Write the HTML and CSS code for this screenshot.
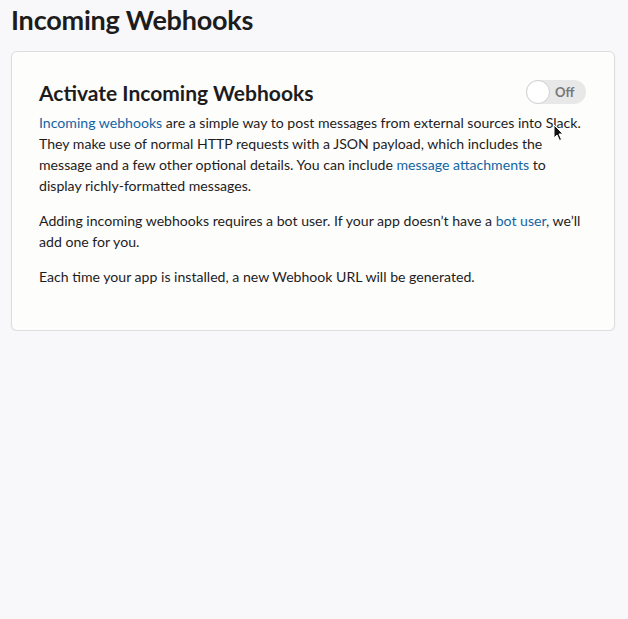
FILE: index.html
```html
<!DOCTYPE html>
<html lang="en">
<head>
    <meta charset="UTF-8">
    <title>Incoming Webhooks</title>
    <link rel="stylesheet" href="styles.css">
</head>
<body>
    <h1>Incoming Webhooks</h1>
    <div class="card">
        <div class="card-head">
            <h2>Activate Incoming Webhooks</h2>
            <div class="toggle">
                <span class="knob"></span>
                <span class="toggle-label">Off</span>
            </div>
        </div>
        <p><a href="#">Incoming webhooks</a> are a simple way to post messages from external sources into Slack. They make use of normal HTTP requests with a JSON payload, which includes the message and a few other optional details. You can include <a href="#">message attachments</a> to display richly-formatted messages.</p>
        <p>Adding incoming webhooks requires a bot user. If your app doesn’t have a <a href="#">bot user</a>, we’ll add one for you.</p>
        <p>Each time your app is installed, a new Webhook URL will be generated.</p>
        <!-- puntero del ratón -->
        <svg class="cursor" width="12" height="18" viewBox="0 0 12 18">
            <path d="M1 1 L1 14 L4 11 L6.5 16.5 L8.5 15.5 L6 10 L10 10 Z" fill="#111" stroke="#fff" stroke-width="1"/>
        </svg>
    </div>
</body>
</html>
```

FILE: styles.css
```css
body {
    font-family: Lato, "Open Sans", sans-serif;
    margin: 0;
    padding: 0 13px 0 11px;
    background-color: #f8f8fa;
    color: #1d1c1d;
}

h1 {
    font-size: 27px;
    font-weight: 700;
    margin: 0;
    padding: 4px 0 15px;
    line-height: 32px;
    letter-spacing: -0.2px;
}

.card {
    position: relative;
    background-color: #fdfdfc;
    border: 1px solid #dddddd;
    border-radius: 6px;
    box-shadow: 0 1px 2px rgba(0, 0, 0, 0.06);
    padding: 27px 28px 33px 27px;
}

.card-head {
    display: flex;
    align-items: center;
    justify-content: space-between;
    margin-bottom: 5px;
}

h2 {
    font-size: 21px;
    font-weight: 700;
    margin: 0;
    line-height: 28px;
}

.toggle {
    display: flex;
    align-items: center;
    width: 60px;
    height: 24px;
    background-color: #e8e8e8;
    border-radius: 12px;
    margin-top: -2px;
    box-sizing: border-box;
}

.knob {
    width: 24px;
    height: 24px;
    border-radius: 50%;
    background-color: #fff;
    border: 1px solid #d0d0d0;
    box-sizing: border-box;
}

.toggle-label {
    font-size: 13px;
    font-weight: 700;
    color: #777;
    margin-left: 5px;
}

p {
    font-size: 14.1px;
    line-height: 21px;
    margin: 2px 0 14px;
}

p:last-of-type {
    margin-bottom: 10px;
}

a {
    color: #1264a3;
    text-decoration: none;
}

.cursor {
    position: absolute;
    left: 541px;
    top: 72px;
}
```
